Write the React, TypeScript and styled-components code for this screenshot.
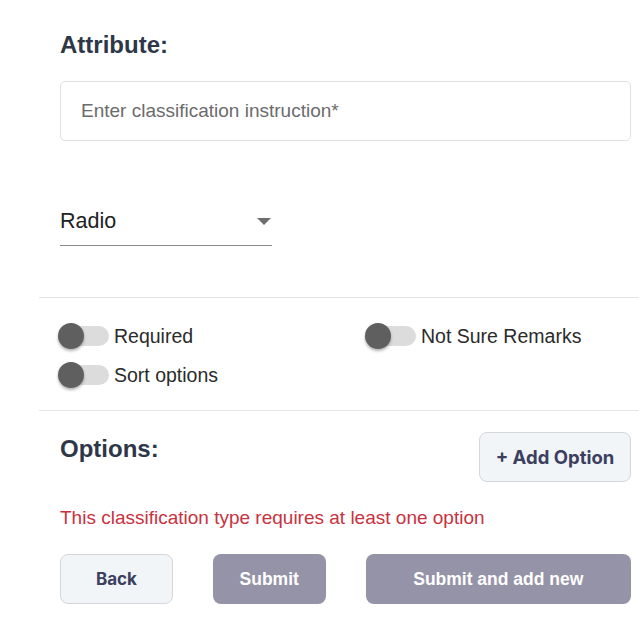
import { ReactElement } from "react";
import styled, { createGlobalStyle } from "styled-components";

const GlobalStyle = createGlobalStyle`
  body {
    margin: 0;
    background: #ffffff;
    font-family: "Liberation Sans", Arial, sans-serif;
  }
`;

const Page = styled.main`
  padding: 31px 0 0 39px;
  width: 600px;
`;

const Section = styled.section`
  padding: 0 8px 0 21px;
`;

const Heading = styled.h2`
  margin: 0;
  font-size: 24px;
  line-height: 28px;
  font-weight: 700;
  color: #2d3748;
`;

const TextInput = styled.input`
  display: block;
  box-sizing: border-box;
  width: 100%;
  height: 60px;
  margin-top: 22px;
  padding: 0 20px;
  border: 1px solid #e0e0e0;
  border-radius: 5px;
  font-family: "Liberation Sans", Arial, sans-serif;
  font-size: 19px;
  color: #333;
  outline: none;

  &::placeholder {
    color: #6b6b6b;
  }
`;

const Select = styled.div`
  margin-top: 60px;
  width: 212px;
  height: 40px;
  display: flex;
  align-items: center;
  justify-content: space-between;
  border-bottom: 1px solid #8a8a8a;
  font-size: 21.5px;
  color: #222;
  padding-bottom: 4px;
`;

const Caret = styled.span`
  width: 0;
  height: 0;
  margin-right: 1px;
  border-left: 7px solid transparent;
  border-right: 7px solid transparent;
  border-top: 7px solid #6e6e6e;
`;

const Divider = styled.hr`
  margin: 0;
  border: 0;
  border-top: 1px solid #e6e6e6;
`;

const Spacer = styled.div`
  height: 51px;
`;

const ToggleGrid = styled.div`
  display: grid;
  grid-template-columns: 307px 1fr;
  row-gap: 13px;
  padding: 25px 8px 22px 20px;
`;

const ToggleItem = styled.label`
  display: flex;
  align-items: center;
  height: 26px;
  font-size: 19.5px;
  color: #2b2b2b;
`;

const Track = styled.span`
  position: relative;
  width: 46px;
  height: 20px;
  margin-left: 4px;
  border-radius: 10px;
  background: #dcdcdc;
  flex-shrink: 0;
`;

const Thumb = styled.span`
  position: absolute;
  left: -5px;
  top: -3px;
  width: 26px;
  height: 26px;
  border-radius: 50%;
  background: #5f5f5f;
  box-shadow: 0 2px 3px rgba(0, 0, 0, 0.3);
`;

const ToggleLabel = styled.span`
  margin-left: 5px;
`;

const OptionsRow = styled.div`
  display: flex;
  justify-content: space-between;
  align-items: flex-start;
  padding-top: 21px;
`;

const OptionsHeading = styled(Heading)`
  margin-top: 3px;
`;

const Button = styled.button<{ $variant: "light" | "muted"; $width: number; $size?: number }>`
  box-sizing: border-box;
  width: ${({ $width }) => $width}px;
  height: 50px;
  border-radius: 8px;
  font-weight: 700;
  cursor: pointer;
  ${({ $variant }) =>
    $variant === "light"
      ? `
    background: #f2f5f8;
    border: 1px solid #d3d6da;
    color: #3c3f5e;
    font-family: Inter, "Liberation Sans", sans-serif;
  `
      : `
    background: #9593a8;
    border: none;
    color: #ffffff;
    font-family: "Liberation Sans", Arial, sans-serif;
  `}
  font-size: ${({ $size }) => $size ?? 17.5}px;
`;

const ErrorText = styled.p`
  margin: 24px 0 0;
  font-size: 19px;
  line-height: 24px;
  color: #c8323f;
`;

const Actions = styled.div`
  display: flex;
  gap: 40px;
  margin-top: 24px;
`;

const Toggle = ({ label }: { label: string }): ReactElement => (
  <ToggleItem>
    <Track>
      <Thumb />
    </Track>
    <ToggleLabel>{label}</ToggleLabel>
  </ToggleItem>
);

const App = (): ReactElement => {
  return (
    <Page>
      <GlobalStyle />
      <Section>
        <Heading>Attribute:</Heading>
        <TextInput placeholder="Enter classification instruction*" />
        <Select>
          <span>Radio</span>
          <Caret />
        </Select>
      </Section>

      <Spacer />
      <Divider />

      <ToggleGrid>
        <Toggle label="Required" />
        <Toggle label="Not Sure Remarks" />
        <Toggle label="Sort options" />
      </ToggleGrid>

      <Divider />

      <Section>
        <OptionsRow>
          <OptionsHeading>Options:</OptionsHeading>
          <Button $variant="light" $width={152} $size={18.5}>
            + Add Option
          </Button>
        </OptionsRow>
        <ErrorText>This classification type requires at least one option</ErrorText>
        <Actions>
          <Button $variant="light" $width={113} $size={17}>
            Back
          </Button>
          <Button $variant="muted" $width={113}>
            Submit
          </Button>
          <Button $variant="muted" $width={266}>
            Submit and add new
          </Button>
        </Actions>
      </Section>
    </Page>
  );
};

export default App;
